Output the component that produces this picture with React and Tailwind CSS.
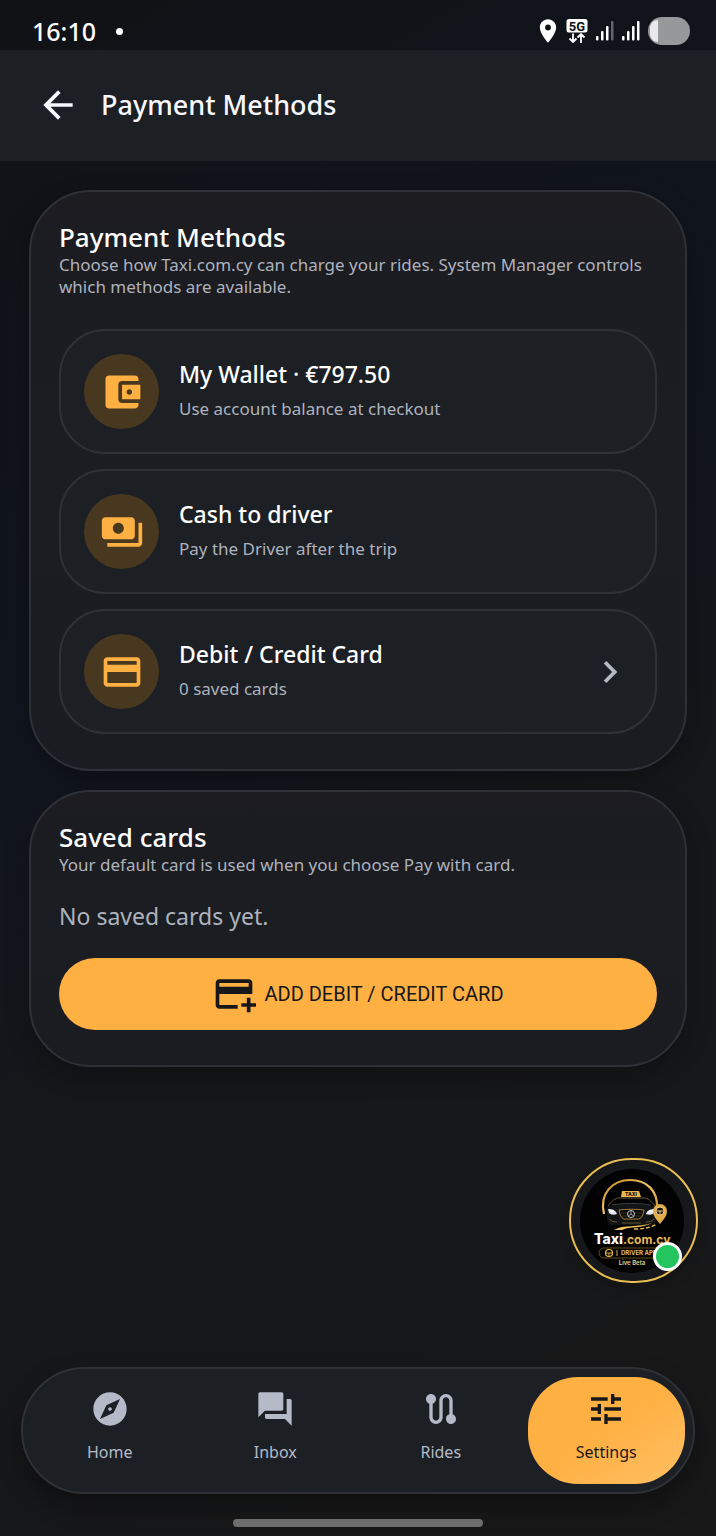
import { useState } from 'react'
import {
  MdAccountBalanceWallet,
  MdAddCard,
  MdArrowBack,
  MdChevronRight,
  MdCreditCard,
  MdExplore,
  MdForum,
  MdLocationOn,
  MdPayments,
  MdRoute,
  MdTune,
} from 'react-icons/md'

const methods = [
  { id: 'wallet', title: 'My Wallet · €797.50', note: 'Use account balance at checkout', icon: MdAccountBalanceWallet },
  { id: 'cash', title: 'Cash to driver', note: 'Pay the Driver after the trip', icon: MdPayments },
  { id: 'card', title: 'Debit / Credit Card', note: '0 saved cards', icon: MdCreditCard, more: true },
]

const tabs = [
  { label: 'Home', icon: MdExplore },
  { label: 'Inbox', icon: MdForum },
  { label: 'Rides', icon: MdRoute },
  { label: 'Settings', icon: MdTune },
]

function SignalBars({ weak }) {
  return (
    <svg viewBox="0 0 18 20" className="w-[18px] h-5" fill="#fff" aria-hidden="true">
      <rect x="0" y="15" width="2.500" height="4.500" rx="1" />
      <rect x="5" y="10" width="2.500" height="9.500" rx="1" />
      <rect x="10" y="5" width="2.500" height="14.500" rx="1" />
      <rect x="15" y="0" width="2.500" height="19.500" rx="1" opacity={weak ? 0.35 : 1} />
    </svg>
  )
}

function StatusBar() {
  return (
    <div className="h-[50px] shrink-0 pl-8 pr-[26px] pt-3 flex items-center justify-between text-white">
      <div className="flex items-center gap-5">
        <span className="text-[25px] leading-8 font-medium">16:10</span>
        <span className="w-[7px] h-[7px] rounded-full bg-white" />
      </div>
      <div className="flex items-center">
        <MdLocationOn className="w-7 h-7" />
        <svg viewBox="0 0 22 24" className="w-[22px] h-6 ml-1 mr-2" aria-hidden="true">
          <rect x="0.500" y="0" width="21" height="13.500" rx="2.500" fill="#fff" />
          <text x="11" y="11.500" textAnchor="middle" fontSize="13" fontWeight="700" fill="#101317" fontFamily="Roboto, sans-serif">5G</text>
          <path d="M7 14.500v8M3.500 19.500 7 23l3.500-3.500M15 24v-8.500M11.500 18.500 15 15l3.500 3.500" fill="none" stroke="#fff" strokeWidth="1.800" />
        </svg>
        <SignalBars weak />
        <span className="w-2" />
        <SignalBars />
        <span className="ml-2 w-[42px] h-7 rounded-full bg-[#97989b] overflow-hidden flex py-[3px]">
          <span className="ml-0.5 w-2 h-full bg-[#e9e9ea] rounded-l-full" />
        </span>
      </div>
    </div>
  )
}

function Card({ title, note, children }) {
  return (
    <section className="rounded-[62px] border-2 border-[#2e3136] bg-linear-to-b from-[#1c1c21] via-[#1a1d21] to-[#1b1c21] px-7 pt-7 pb-[35px] shadow-[0_8px_24px_rgba(0,0,0,0.3)]">
      <h2 className="text-[26px] leading-[34px] font-medium text-white">{title}</h2>
      <p className="text-[17px] leading-[22px] text-[#aeb2bd]">{note}</p>
      {children}
    </section>
  )
}

function AssistantLogo() {
  return (
    <svg viewBox="0 0 104 104" className="w-[104px] h-[104px]" aria-hidden="true">
      <defs>
        <linearGradient id="gold" x1="0" y1="0" x2="1" y2="1">
          <stop offset="0" stopColor="#c8892a" />
          <stop offset="0.500" stopColor="#f2c763" />
          <stop offset="1" stopColor="#c48a2c" />
        </linearGradient>
      </defs>
      <circle cx="52" cy="52" r="52" fill="#020203" />
      <path d="M24 45C19 24 33 11 50 11c17 0 28 11 27 28" fill="none" stroke="url(#gold)" strokeWidth="2.200" />
      {/* roof sign and car body */}
      <path d="M42 22h17l2 6H41z" fill="#e9b94f" />
      <text x="51" y="27" textAnchor="middle" fontSize="5" fontWeight="800" fill="#15120a" fontFamily="Inter, sans-serif">TAXI</text>
      <path d="M28 37c4-5 7-8 11-8h25c4 0 7 3 11 8" fill="none" stroke="#6b5a32" strokeWidth="1" />
      <path d="M27 38c8-4 41-4 49 0l1 10c0 5-1 7-3 8H30c-2-1-3-3-3-8z" fill="#131416" />
      <path d="M32 36c12-2 27-2 39 0" fill="none" stroke="#4c4e52" strokeWidth="0.800" />
      <path d="M28 40c4 0 8 1 9 5-3 1-6 1-8-1zM75 40c-4 0-8 1-9 5 3 1 6 1 8-1z" fill="#e4e8ec" />
      <path d="M30 42h4M73 42h-4" stroke="#fff" strokeWidth="1.500" />
      <path d="M39 41c8-1 17-1 25 0-1 5-2 8-5 9H44c-3-1-4-4-5-9z" fill="#08090a" stroke="#b08a3c" strokeWidth="0.900" />
      <path d="M41 44h21M42 47h19" stroke="#57482a" strokeWidth="0.700" />
      <circle cx="51" cy="45" r="3.500" fill="#0a0b0c" stroke="#c3c5c8" strokeWidth="1" />
      <path d="M51 42v3l-2.500 2M51 45l2.500 2" fill="none" stroke="#c3c5c8" strokeWidth="0.800" />
      <path d="M29 50c2 2 5 3 8 3M74 50c-2 2-5 3-8 3M42 54h19" fill="none" stroke="#7c6535" strokeWidth="0.800" />
      {/* road */}
      <path d="M34 61c9-6 24-2 38-7-10 6-22 3-30 7z" fill="url(#gold)" />
      <path d="M54 60c9 0 16-1 23-5" fill="none" stroke="#e7b751" strokeWidth="1.500" strokeDasharray="4 2" />
      <path d="M80 55c-4-5-7-8-7-13a7 7 0 0 1 14 0c0 5-3 8-7 13z" fill="#e2ad48" />
      <circle cx="80" cy="42" r="4" fill="#1a1408" stroke="#f3d385" strokeWidth="1" />
      <path d="M77 42h6M80 42v3" stroke="#f3d385" strokeWidth="1" />
      <text x="14" y="75" fontSize="14" fontWeight="800" fill="#fff" fontFamily="Inter, sans-serif">Taxi<tspan fontSize="12" fontWeight="700" fill="#e9b94f">.com.cy</tspan></text>
      <rect x="19" y="79" width="74" height="10" rx="5" fill="none" stroke="#7b5c22" strokeWidth="0.800" />
      <circle cx="29" cy="84" r="3.500" fill="none" stroke="#e9b94f" strokeWidth="1.200" />
      <path d="M26 84h6M29 84v3M37 81v6" stroke="#e9b94f" strokeWidth="0.900" />
      <text x="41" y="86" fontSize="6" fontWeight="700" fill="#d9bd80" fontFamily="Inter, sans-serif">DRIVER APP</text>
      <text x="52" y="96" textAnchor="middle" fontSize="6" fontWeight="600" fill="#ecd08a" fontFamily="Inter, sans-serif">Live Beta</text>
    </svg>
  )
}

export default function App() {
  const [active, setActive] = useState('Settings')

  return (
    <div className="relative min-h-screen flex flex-col font-['Noto_Sans',sans-serif] bg-[linear-gradient(150deg,#101215_0%,#11151e_39%,#16171a_60%,#181818_100%)]">
      <StatusBar />

      <header className="h-[111px] shrink-0 bg-[#1c1f24] px-9 pb-0.5 flex items-center gap-[21px]">
        <button type="button" aria-label="Back" className="text-[#f7f7ff]">
          <MdArrowBack className="w-11 h-11" />
        </button>
        <h1 className="text-[27px] leading-9 font-medium text-[#f7f7ff]">Payment Methods</h1>
      </header>

      <main className="flex-1 px-[29px] pt-[29px] flex flex-col gap-[19px]">
        <Card title="Payment Methods" note="Choose how Taxi.com.cy can charge your rides. System Manager controls which methods are available.">
          <div className="mt-[31px] flex flex-col gap-[15px]">
            {methods.map(m => (
              <button
                key={m.id}
                type="button"
                className="h-[125px] w-full rounded-[46px] border-2 border-[#2e3136] bg-[#1c1f24] px-[23px] flex items-center gap-5 text-left"
              >
                <span className="w-[75px] h-[75px] shrink-0 rounded-full bg-[#493820] flex items-center justify-center text-[#ffb043]">
                  <m.icon className="w-11 h-11" />
                </span>
                <span className="flex-1 flex flex-col gap-1 pb-0.5">
                  <span className="text-[23px] leading-8 font-medium text-white">{m.title}</span>
                  <span className="text-[17px] leading-[30px] text-[#aeb2bd]">{m.note}</span>
                </span>
                {m.more && <MdChevronRight className="w-11 h-11 text-[#b4b9c4]" />}
              </button>
            ))}
          </div>
        </Card>

        <Card title="Saved cards" note="Your default card is used when you choose Pay with card.">
          <p className="mt-6 text-[23px] leading-8 text-[#aeb2bd]">No saved cards yet.</p>
          <button
            type="button"
            className="mt-[26px] h-[72px] w-full rounded-full bg-[#ffb043] flex items-center justify-center gap-2 text-[#17171a]"
          >
            <MdAddCard className="w-11 h-11" />
            <span className="text-[20px] leading-7 font-['Roboto',sans-serif]">ADD DEBIT / CREDIT CARD</span>
          </button>
        </Card>
      </main>

      {/* floating assistant button */}
      <button
        type="button"
        aria-label="Open assistant"
        className="absolute right-[18px] bottom-[253px] w-[129px] h-[125px] rounded-full border-2 border-[#e8bf50] bg-[#17181b] pr-[3px] flex items-center justify-center shadow-lg"
      >
        <AssistantLogo />
        <span className="absolute right-3.5 bottom-2.5 w-[29px] h-[29px] rounded-full border-3 border-white bg-[#22c55e]" />
      </button>

      <footer className="px-[21px] pb-[9px] flex flex-col items-center">
        <nav className="w-full h-[127px] rounded-full border-2 border-[#2e3136] bg-[#1c1f24] p-2 grid grid-cols-4 gap-2 shadow-[0_12px_24px_rgba(0,0,0,0.35)]">
          {tabs.map(tab => (
            <button
              key={tab.label}
              type="button"
              onClick={() => setActive(tab.label)}
              className={`rounded-[50px] flex flex-col items-center pt-3 gap-[11px] ${active === tab.label ? 'bg-linear-to-br from-[#ffb043] from-50% to-[#ffc062] text-[#17171a]' : 'text-[#b4bac8]'}`}
            >
              <tab.icon className="w-10 h-10" />
              <span className="text-[16px] leading-6">{tab.label}</span>
            </button>
          ))}
        </nav>
        <span className="mt-[25px] w-[250px] h-2 rounded-full bg-[#6d6d6d]" />
      </footer>
    </div>
  )
}
